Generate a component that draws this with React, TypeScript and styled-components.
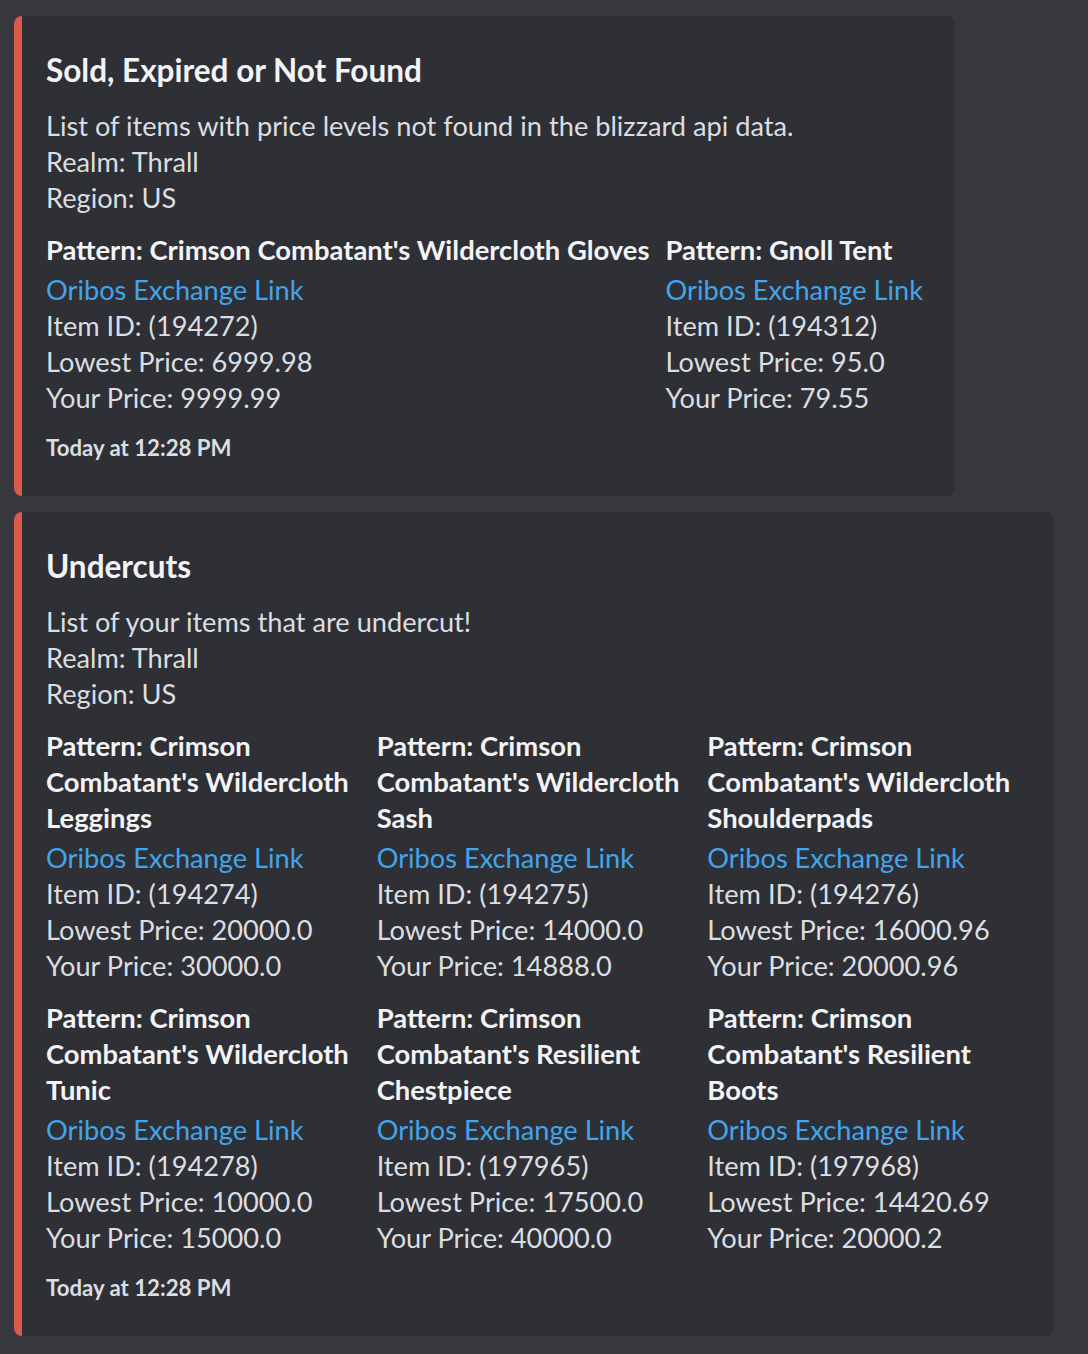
import * as React from "react";
import styled, { createGlobalStyle } from "styled-components";

const GlobalStyle = createGlobalStyle`
  html, body {
    margin: 0;
    padding: 0;
    background: #38393e;
  }
  body {
    font-family: Lato, "Noto Sans", "Liberation Sans", sans-serif;
    -webkit-font-smoothing: antialiased;
  }
`;

const Page = styled.div`
  display: flex;
  flex-direction: column;
  align-items: flex-start;
  gap: 16px;
  min-height: 100vh;
  box-sizing: border-box;
  padding: 16px 0 19px 14px;
`;

const Embed = styled.article<{ $fit?: boolean }>`
  display: grid;
  box-sizing: border-box;
  width: ${(p) => (p.$fit ? "fit-content" : "1040px")};
  max-width: 1040px;
  padding: 16px 32px 32px 24px;
  background: #2f3035;
  border-left: 8px solid #d95a49;
  border-radius: 8px;
`;

const Title = styled.h2`
  margin: 16px 0 0;
  font-size: 31.5px;
  line-height: 44px;
  font-weight: 700;
  color: #f2f3f5;
`;

const Description = styled.div`
  margin-top: 16px;
  font-size: 27.2px;
  line-height: 36px;
  color: #dbdee1;
  white-space: pre-line;
`;

const Fields = styled.div<{ $cols: string }>`
  display: grid;
  grid-template-columns: ${(p) => p.$cols};
  column-gap: 16px;
  row-gap: 16px;
  margin-top: 16px;
`;

const Field = styled.div`
  min-width: 0;
`;

const FieldName = styled.div`
  margin-bottom: 4px;
  font-size: 27.4px;
  line-height: 36px;
  font-weight: 700;
  color: #f2f3f5;
`;

const FieldValue = styled.div`
  font-size: 27.2px;
  line-height: 36px;
  color: #dbdee1;
`;

const Link = styled.a`
  color: #42a5eb;
  text-decoration: none;
`;

const Footer = styled.div`
  margin-top: 16px;
  font-size: 22.2px;
  line-height: 32px;
  font-weight: 700;
  color: #dbdee1;
`;

type Item = { name: string; id: string; lowest: string; yours: string };

const soldItems: Item[] = [
  { name: "Pattern: Crimson Combatant's Wildercloth Gloves", id: "194272", lowest: "6999.98", yours: "9999.99" },
  { name: "Pattern: Gnoll Tent", id: "194312", lowest: "95.0", yours: "79.55" },
];

const undercutItems: Item[] = [
  { name: "Pattern: Crimson Combatant's Wildercloth Leggings", id: "194274", lowest: "20000.0", yours: "30000.0" },
  { name: "Pattern: Crimson Combatant's Wildercloth Sash", id: "194275", lowest: "14000.0", yours: "14888.0" },
  { name: "Pattern: Crimson Combatant's Wildercloth Shoulderpads", id: "194276", lowest: "16000.96", yours: "20000.96" },
  { name: "Pattern: Crimson Combatant's Wildercloth Tunic", id: "194278", lowest: "10000.0", yours: "15000.0" },
  { name: "Pattern: Crimson Combatant's Resilient Chestpiece", id: "197965", lowest: "17500.0", yours: "40000.0" },
  { name: "Pattern: Crimson Combatant's Resilient Boots", id: "197968", lowest: "14420.69", yours: "20000.2" },
];

const ItemField = ({ item }: { item: Item }) => (
  <Field>
    <FieldName>{item.name}</FieldName>
    <FieldValue>
      <Link href="#">Oribos Exchange Link</Link>
    </FieldValue>
    <FieldValue>Item ID: ({item.id})</FieldValue>
    <FieldValue>Lowest Price: {item.lowest}</FieldValue>
    <FieldValue>Your Price: {item.yours}</FieldValue>
  </Field>
);

const AlertEmbed = ({
  title,
  description,
  items,
  cols,
  fit,
}: {
  title: string;
  description: string;
  items: Item[];
  cols: string;
  fit?: boolean;
}) => (
  <Embed $fit={fit}>
    <Title>{title}</Title>
    <Description>{description + "\nRealm: Thrall\nRegion: US"}</Description>
    <Fields $cols={cols}>
      {items.map((it) => (
        <ItemField key={it.id} item={it} />
      ))}
    </Fields>
    <Footer>Today at 12:28 PM</Footer>
  </Embed>
);

export default function App() {
  return (
    <>
      <GlobalStyle />
      <Page>
        <AlertEmbed
          fit
          title="Sold, Expired or Not Found"
          description="List of items with price levels not found in the blizzard api data."
          items={soldItems}
          cols="auto auto"
        />
        <AlertEmbed
          title="Undercuts"
          description="List of your items that are undercut!"
          items={undercutItems}
          cols="repeat(3, minmax(0, 1fr))"
        />
      </Page>
    </>
  );
}
